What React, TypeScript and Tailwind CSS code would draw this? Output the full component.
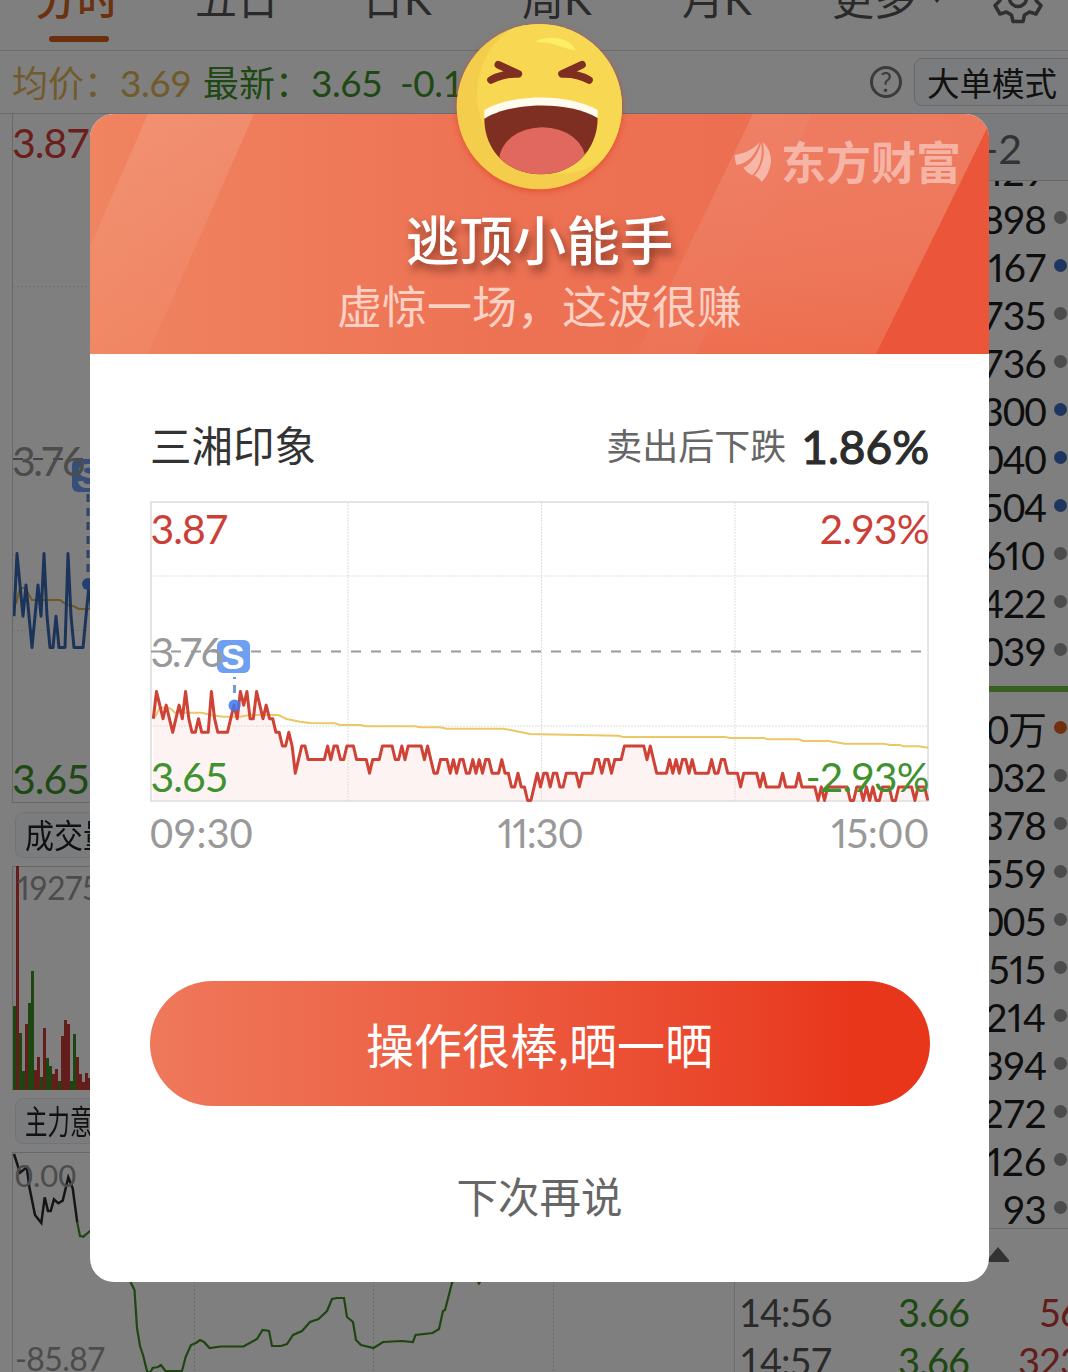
import React from "react";
import { clsx } from "clsx";

// one digit per minute: ticks of 0.01 above 3.65
const ticks = (
  "6876765676" + "8655655586" + "5555676878" + "6687676655" + "4454234433" + "3333434433" +
  "4443333233" + "3444433434" + "4444343223" + "3323233223" + "2323322232" + "2112110012" +
  "1221221122" + "2212222332" + "3323334444" + "4443432222" + "3232332322" + "2223223322" +
  "2212222212" + "1111121111" + "2111110101" + "1111110011" + "0101001110" + "0111110111" + "0"
)
  .split("")
  .map(Number);

const averageLine =
  "45,262 60,232 90,235 105,248 185,248 215,256 250,260 300,260 330,255 415,255 440,267 480,275 510,279 585,280 600,285 660,285 680,289 825,289 840,292 900,292 920,296 1090,296 1130,304 1170,312 1200,313 1435,317 1450,321 1755,321 1770,324 1870,324 1885,328 1975,328 1990,333 2065,333 2115,341 2230,341 2250,345 2280,345 2290,349 2335,349 2365,353";

const volumes: [number, "up" | "down"][] = [
  [84, "down"], [224, "up"], [57, "down"], [19, "down"], [66, "up"], [87, "down"], [119, "down"],
  [20, "up"], [33, "up"], [13, "down"], [62, "up"], [32, "down"], [24, "down"], [16, "up"],
  [21, "up"], [9, "down"], [54, "up"], [70, "up"], [66, "up"], [9, "down"], [56, "down"],
  [33, "up"], [16, "up"], [8, "up"], [17, "up"], [12, "up"],
];

const tabs = ["分时", "五日", "日K", "周K", "月K", "更多"];

const sells = [
  ["129", "gray"], ["898", "gray"], ["167", "blue"], ["735", "gray"], ["736", "gray"], ["300", "blue"],
  ["040", "blue"], ["504", "blue"], ["610", "gray"], ["422", "gray"], ["039", "gray"],
];

const buys = [
  ["0万", "orange"], ["032", "gray"], ["378", "gray"], ["559", "gray"], ["005", "gray"], ["515", "gray"],
  ["214", "gray"], ["394", "gray"], ["272", "gray"], ["126", "gray"], ["93", "gray"],
];

const trades = [
  { time: "14:56", price: "3.66", volume: "56" },
  { time: "14:57", price: "3.66", volume: "323" },
];

function linePoints(x0: number, step: number, base: number, height: number) {
  return ticks.map((t, i) => `${(x0 + i * step).toFixed(1)},${(base - t * height).toFixed(1)}`).join(" ");
}

function OrderRow({ value, dot }: { value: string; dot: string }) {
  return (
    <div className="flex h-12 shrink-0 items-center justify-end gap-2 pr-px">
      <span
        className={clsx(
          "text-[39px] leading-[48px] text-[#1c1c1c]",
          value.includes("1") ? "proportional-nums" : "tracking-[-1px]"
        )}
      >
        {value}
      </span>
      <span
        className={clsx(
          "mb-1 size-[13px] rounded-full",
          dot === "gray" && "bg-[#98989c]",
          dot === "blue" && "bg-[#3f6cbe]",
          dot === "orange" && "bg-[#e06020]"
        )}
      />
    </div>
  );
}

function Gear() {
  return (
    <svg width="52" height="52" viewBox="0 0 52 52" fill="none" stroke="#606060" strokeWidth="3.500" strokeLinejoin="round">
      <path d="M21 3h10l1.500 6.500 5 3 6.500-2.500 5 8.500-5 5v5l5 5-5 8.500-6.500-2-5 3L31 49.500H21L19.500 43l-5-3L8 42l-5-8.500 5-5v-5l-5-5L8 10l6.500 2.500 5-3z" />
      <circle cx="26" cy="26" r="8.500" />
    </svg>
  );
}

function SellMark({ className }: { className?: string }) {
  return (
    <span
      className={clsx(
        "absolute flex size-[33px] items-center justify-center rounded-md bg-[#6e9ff0] font-['Liberation_Sans'] text-[35px] leading-none font-bold text-white",
        className
      )}
    >
      S
    </span>
  );
}

function LeftCharts() {
  return (
    <div className="flex w-[734px] flex-col pl-3">
      <div className="relative h-[689px] border-b border-l border-[#d0d0d0]">
        <svg className="absolute inset-0" width="720" height="688">
          <path d="M0 172.500H720M0 516.500H720" stroke="#e4e4e4" strokeWidth="1" strokeDasharray="2 2" />
          <path d="M0 345H720" stroke="#888" strokeWidth="2" strokeDasharray="10 10" />
          <polyline
            points="3,490 7,474 12,474 19,486 47,486 54,491 60,492 66,495 90,495"
            fill="none"
            stroke="#e0b04a"
            strokeWidth="2"
          />
          <polyline points={linePoints(1, 3, 690, 31.3)} fill="none" stroke="#3a69b4" strokeWidth="3" strokeLinejoin="round" />
          <path d="M75 380V464" stroke="#5c86d8" strokeWidth="3" strokeDasharray="8 6" />
          <circle cx="75" cy="470" r="6" fill="#4a7fe8" />
        </svg>
        <span className="absolute top-[5px] -left-px text-[41px] leading-[48px] tracking-[-1px] text-[#d63c36]">3.87</span>
        <SellMark className="top-[345px] left-[59px]" />
        <span className="absolute top-[323px] -left-px text-[41px] leading-[48px] tracking-[-2.5px] text-[#999]">3.76</span>
        <span className="absolute top-[641px] -left-px text-[41px] leading-[48px] tracking-[-1px] text-[#3d9128]">3.65</span>
      </div>

      <div className="mt-[9px] ml-[3px] flex h-[46px] w-[120px] items-center rounded-lg border border-[#e2e6ec] bg-[#f6f8fb] pl-[9px]">
        <span className="origin-left scale-x-[0.88] text-[33px] leading-none whitespace-nowrap text-[#222]">成交量</span>
      </div>

      <div className="relative mt-2 flex h-[224px] items-end border-t border-l border-[#d0d0d0]">
        {volumes.map(([h, side], i) => (
          <span key={i} className={clsx("w-[3px]", side === "up" ? "bg-[#c63a34]" : "bg-[#3c8c22]")} style={{ height: h }} />
        ))}
        <span className="absolute top-px left-1 text-[32px] leading-[40px] text-[#999] proportional-nums">19275</span>
      </div>

      <div className="mt-2 ml-[3px] flex h-[46px] w-[120px] items-center rounded-lg border border-[#e2e6ec] bg-[#f6f8fb] pl-[9px]">
        <span className="origin-left scale-x-[0.68] text-[33px] leading-none whitespace-nowrap text-[#222]">主力意愿</span>
      </div>

      <div className="relative mt-2 h-[220px] border-t border-l border-[#d0d0d0]">
        <svg className="absolute -top-px left-[-13px]" width="734" height="220" viewBox="0 1152 734 220" fill="none">
          <path d="M194.500 1153V1373M373.500 1153V1373M553.500 1153V1373" stroke="#d4d4d4" strokeDasharray="2 2" />
          <polyline
            points="14,1154 20,1172.700 26.700,1167.300 29.300,1186.700 35,1215 41.300,1223 44.700,1197.300 48,1211 50.700,1211 54,1199.300 58.300,1203.300 62.700,1200.700 68.300,1177.300 72.700,1188.300 77.300,1222.700"
            stroke="#2a2a2a"
            strokeWidth="2.500"
          />
          <polyline
            points="77.300,1222.700 80,1236 83.300,1236.700 90,1231 110,1240 125,1262 131,1283 134.500,1290 137,1328 140,1346 143,1355 147,1371 150,1373 152.600,1368 158,1367 161,1365 165.500,1371 182,1371 185.600,1357 191,1345 196,1343 200,1340 204,1342 209.500,1348 221,1346.500 243.500,1346.500 257,1339 262.600,1330 269,1331 272,1346 281,1346 287,1344 293,1335 302,1331 310,1322 318.500,1319 327,1311 332,1299 337,1298 344,1298 347,1317 353,1322 356,1340 361,1345 373.600,1348 383,1342 402,1341 413,1342 415.500,1335 432.600,1333 439,1329 443,1311 445,1310 452,1283 460,1270 470,1268 479,1283.500 488,1270"
            stroke="#3c8c22"
            strokeWidth="2.200"
          />
        </svg>
        <span className="absolute top-0.5 left-0.5 text-[31px] leading-[40px] text-[#999]">0.00</span>
        <span className="absolute top-[186px] left-0.5 text-[32px] leading-[40px] tracking-[-0.6px] text-[#999]">-85.87</span>
      </div>
    </div>
  );
}

function OrderBook() {
  return (
    <div className="flex flex-1 flex-col border-l border-[#d8d8d8]">
      <div className="flex h-[67px] items-center justify-end border-b border-[#cfd1d5] bg-[#f4f6f9] pt-1 pr-[46px] text-[41px] text-[#666]">
        -2
      </div>
      <div className="flex h-[505px] flex-col overflow-hidden">
        <div className="-mt-[34px]">
          {sells.map(([value, dot]) => (
            <OrderRow key={value} value={value} dot={dot} />
          ))}
        </div>
      </div>
      <div className="h-1.5 bg-[#72bf45]" />
      <div className="h-[537px] overflow-hidden border-b border-[#d8d8d8] pt-[13px]">
        {buys.map(([value, dot]) => (
          <OrderRow key={value} value={value} dot={dot} />
        ))}
      </div>
      <div className="flex h-[58px] items-center justify-end pr-[59px]">
        <svg width="22" height="15" className="-mt-2">
          <path d="M11 0L22 13V15H0V13Z" fill="#666" />
        </svg>
      </div>
      {trades.map((trade) => (
        <div key={trade.time} className="flex h-[49px] shrink-0 items-center text-[38px] leading-[48px] tracking-[-1px]">
          <span className="w-[120px] pl-1 text-[#555]">{trade.time}</span>
          <span className="w-[114px] text-right text-[#3d9128]">{trade.price}</span>
          <span className="-mr-[13px] flex-1 text-right text-[#c63a34]">{trade.volume}</span>
        </div>
      ))}
    </div>
  );
}

function Page() {
  return (
    <div className="flex h-full flex-col overflow-hidden bg-white">
      <div className="flex h-[51px] shrink-0 border-b border-[#d6d8da]">
        {tabs.map((tab, i) => (
          <div
            key={tab}
            className={clsx(
              "relative flex w-[160px] shrink-0 flex-col items-center text-[42px]",
              i === 0 ? "-ml-[3px] font-medium text-[#d6641e]" : "text-[#555]"
            )}
          >
            <span className={clsx("-mt-[26px] leading-[50px]", tab === "更多" && "mr-1.5")}>{tab}</span>
            {i === 0 && <span className="mt-3 ml-1 h-1.5 w-[60px] shrink-0 rounded-full bg-[#d6601c]" />}
            {tab === "更多" && (
              <svg className="absolute -top-1.5 right-[13px]" width="14" height="9">
                <path d="M0 0H14L7 9Z" fill="#555" />
              </svg>
            )}
          </div>
        ))}
        <div className="-mt-7 flex flex-1 justify-end pr-[24px]">
          <Gear />
        </div>
      </div>

      <div className="flex h-[63px] shrink-0 items-center border-b border-[#d6d8da] pl-3 text-[36px] whitespace-nowrap">
        <span className="mt-0.5 w-[191px] text-[#e2b458]">
          均价：<span className="text-[37px] tracking-[-0.5px]">3.69</span>
        </span>
        <span className="mt-0.5 text-[#3d9128]">
          最新：<span className="text-[37px] tracking-[-0.5px]">3.65&nbsp; -0.11</span>
        </span>
        <span className="ml-auto flex size-8 shrink-0 items-center justify-center rounded-full border-[3px] border-[#777] text-[26px] leading-none text-[#777]">
          ?
        </span>
        <span className="mr-[-10px] ml-3 flex h-12 w-[164px] items-center rounded-lg border border-[#cbd2dc] bg-[#f6f8fb] pt-1 pl-3 text-[32.500px] text-[#222]">
          大单模式
        </span>
      </div>

      <div className="flex flex-1">
        <LeftCharts />
        <OrderBook />
      </div>
    </div>
  );
}

function LaughingFace() {
  return (
    <svg
      className="absolute -top-[91px] left-[366px] drop-shadow-[0_2px_3px_rgba(220,60,20,0.6)]"
      width="167"
      height="167"
      viewBox="49 37 501 501"
    >
      <defs>
        <clipPath id="face">
          <circle cx="299" cy="288" r="248" />
        </clipPath>
        <clipPath id="mouth">
          <path d="M134 324C220 272 388 272 474 322C474 420 400 491 304 491C205 491 134 420 134 324Z" />
        </clipPath>
      </defs>
      <circle cx="299" cy="288" r="248" fill="#f4cd4c" />
      <ellipse cx="352" cy="250" rx="240" ry="240" fill="#f8d853" clipPath="url(#face)" />
      <path d="M286 93C325 72 390 78 408 119C370 113 345 94 286 93Z" fill="#fdee68" />
      <path
        d="M176 162L236 190Q190 188 154 208M427 162L367 190Q413 188 448 208"
        fill="none"
        stroke="#7f2f22"
        strokeWidth="23"
        strokeLinecap="round"
        strokeLinejoin="round"
      />
      <path d="M134 298C220 248 385 248 474 298V324C385 274 220 274 134 325Z" fill="#fffbee" />
      <path d="M134 324C220 272 388 272 474 322C474 420 400 491 304 491C205 491 134 420 134 324Z" fill="#7f2f22" />
      <ellipse cx="308" cy="450" rx="130" ry="100" fill="#e0685f" clipPath="url(#mouth)" />
    </svg>
  );
}

function Banner() {
  return (
    <div className="relative h-60 overflow-hidden rounded-t-3xl bg-linear-to-r from-[#f08460] via-[#ed7254] via-45% to-[#ec6c4e]">
      <svg className="absolute inset-0" width="900" height="240">
        <defs>
          <linearGradient id="stripe" x1="0" y1="0" x2="0" y2="1">
            <stop offset="0" stopColor="#fff" stopOpacity="0.12" />
            <stop offset="1" stopColor="#fff" stopOpacity="0.03" />
          </linearGradient>
          <linearGradient id="corner" x1="0" y1="0" x2="0" y2="1">
            <stop offset="0" stopColor="#fff" stopOpacity="0.09" />
            <stop offset="1" stopColor="#f06a48" stopOpacity="0.2" />
          </linearGradient>
        </defs>
        <path d="M58 0H164L58 240H-47Z" fill="url(#stripe)" />
        <path d="M722 0H900V240H606Z" fill="url(#corner)" />
        <path d="M663 0H722L606 240H547Z" fill="url(#stripe)" />
        <path d="M904 0L786 240H900Z" fill="#eb563a" />
      </svg>
      <div className="absolute top-[22px] right-[28px] flex items-center gap-[9px] text-white/45">
        <svg width="38" height="40" viewBox="0 0 108 118" fill="currentColor">
          <path d="M0 38C30 34 54 22 74 0C62 36 42 62 6 68C2 58 0 50 0 38Z" />
          <path d="M26 76C54 60 70 34 78 2C84 40 76 76 52 98C40 92 32 86 26 76Z" />
          <path d="M83 0C100 18 108 36 107 58C104 84 94 102 80 118C74 110 68 104 58 99C84 72 90 36 83 0Z" />
        </svg>
        <span className="pt-0.5 text-[45px] leading-[50px] font-bold">东方财富</span>
      </div>
      <div className="relative flex flex-col items-center pt-[96px]">
        <h2 className="text-[53.500px] leading-[60px] font-medium text-white [text-shadow:3px_6px_8px_rgba(90,30,15,0.7)]">逃顶小能手</h2>
        <p className="mt-[13px] text-[45px] leading-[48px] text-[#fdd0c4]">虚惊一场，这波很赚</p>
      </div>
    </div>
  );
}

function PriceChart() {
  const points = linePoints(3.3, 3.227, 299.5, 13.63);
  return (
    <div className="relative h-[301px] w-[780px]">
      <svg className="absolute inset-0 overflow-visible" width="780" height="301">
        <polygon points={`3.3,299 ${points} 778,299`} fill="#fdf3f2" />
        <path d="M1 75H778M1 225H778M198 1V300M391.500 1V300M585 1V300" stroke="#ddd" strokeDasharray="2 1" />
        <rect x="1" y="1" width="777" height="299" fill="none" stroke="#dcdcdc" strokeWidth="1.500" />
        <path d="M1 150.500H772" stroke="#999" strokeWidth="2" strokeDasharray="10 10" />
        <g transform="scale(0.33333) translate(-30 387)">
          <polyline points={averageLine} fill="none" stroke="#ecc766" strokeWidth="6" />
        </g>
        <polyline points={points} fill="none" stroke="#cf4337" strokeWidth="3" strokeLinejoin="round" />
        <path d="M84.500 176V198" stroke="#7299e0" strokeWidth="3" strokeDasharray="2 6 8 6" />
        <circle cx="84.500" cy="204.500" r="6" fill="#3f77ee" fillOpacity="0.85" />
      </svg>
      <SellMark className="top-[139px] left-[67px]" />
      <div className="relative flex h-full flex-col justify-between px-px pb-px text-[41px] leading-[48px] tracking-[-1px]">
        <div className="flex justify-between pt-1 text-[#cb3f38]">
          <span>3.87</span>
          <span>2.93%</span>
        </div>
        <span className="-mt-0.5 tracking-[-2.5px] text-[#999]">3.76</span>
        <div className="flex justify-between text-[#3f9230]">
          <span>3.65</span>
          <span>-2.93%</span>
        </div>
      </div>
    </div>
  );
}

function ResultDialog() {
  return (
    <div className="absolute top-[114px] left-[90px] flex h-[1168px] w-[899px] flex-col rounded-3xl bg-white">
      <Banner />
      <LaughingFace />
      <div className="flex flex-1 flex-col items-center px-[60px]">
        <div className="mt-[62px] flex h-[60px] w-full items-center justify-between">
          <span className="text-[41.500px] text-[#333]">三湘印象</span>
          <div className="flex items-center gap-[15px]">
            <span className="text-[36px] text-[#666]">卖出后下跌</span>
            <span className="text-[46px] text-[#2c2c2c] [-webkit-text-stroke:1.2px_#2c2c2c]">1.86%</span>
          </div>
        </div>
        <div className="mt-[25px]">
          <PriceChart />
        </div>
        <div className="mt-[7px] flex w-full justify-between text-[40px] leading-[48px] text-[#999]">
          <span>09:30</span>
          <span className="mr-1 tracking-[-1.2px] proportional-nums">11:30</span>
          <span className="tracking-[-0.5px] proportional-nums">15:00</span>
        </div>
        <button className="mt-[124px] h-[125px] w-[780px] rounded-full bg-linear-to-r from-[#ef785b] to-[#e8361b] to-90% pt-1 text-[48px] text-white">
          操作很棒,晒一晒
        </button>
        <button className="mt-[61px] text-[41.500px] leading-[60px] text-[#666]">下次再说</button>
      </div>
    </div>
  );
}

export default function App() {
  return (
    <div className="relative h-[1372px] w-[1068px] overflow-hidden font-[Lato,'Noto_Sans_CJK_SC',sans-serif]">
      <Page />
      <div className="absolute inset-0 bg-black/50" />
      <ResultDialog />
    </div>
  );
}
